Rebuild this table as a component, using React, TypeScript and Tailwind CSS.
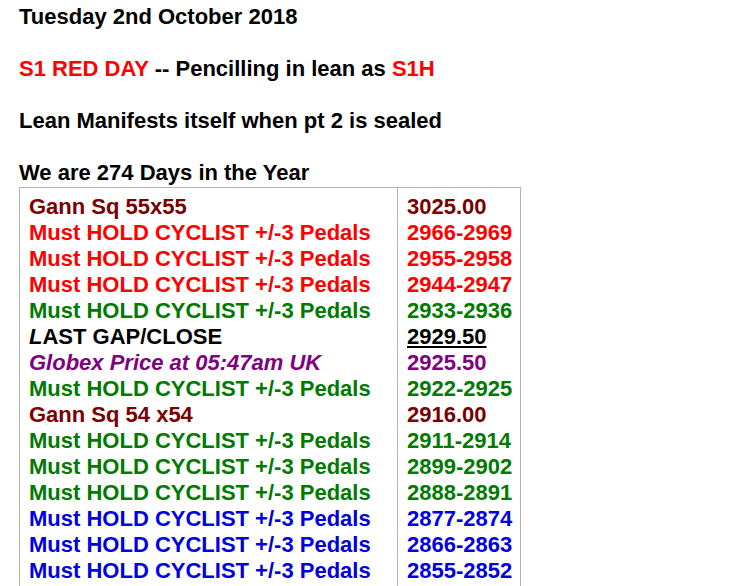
import React from "react";

const MAROON = "text-[#7a0000]";
const RED = "text-[#ff0000]";
const GREEN = "text-[#007a00]";
const BLUE = "text-[#0000e0]";
const PURPLE = "text-[#800080]";

type Row = { left: React.ReactNode; right: React.ReactNode; color: string };

const cyc = "Must HOLD CYCLIST +/-3 Pedals";

const rows: Row[] = [
  { left: "Gann Sq 55x55", right: "3025.00", color: MAROON },
  { left: cyc, right: "2966-2969", color: RED },
  { left: cyc, right: "2955-2958", color: RED },
  { left: cyc, right: "2944-2947", color: RED },
  { left: cyc, right: "2933-2936", color: GREEN },
  {
    left: (
      <>
        <span className="italic">L</span>AST GAP/CLOSE
      </>
    ),
    right: <span className="underline">2929.50</span>,
    color: "text-black",
  },
  { left: <span className="italic">Globex Price at 05:47am UK</span>, right: "2925.50", color: PURPLE },
  { left: cyc, right: "2922-2925", color: GREEN },
  { left: "Gann Sq 54 x54", right: "2916.00", color: MAROON },
  { left: cyc, right: "2911-2914", color: GREEN },
  { left: cyc, right: "2899-2902", color: GREEN },
  { left: cyc, right: "2888-2891", color: GREEN },
  { left: cyc, right: "2877-2874", color: BLUE },
  { left: cyc, right: "2866-2863", color: BLUE },
  { left: cyc, right: "2855-2852", color: BLUE },
];

export default function App() {
  return (
    <div
      className="bg-white min-h-[586px] pl-[19px] pt-[4px] text-black font-bold text-[22px] leading-[26px]"
      style={{ fontFamily: '"Liberation Sans", Arial, sans-serif' }}
    >
      <div className="mb-[26px]">Tuesday 2nd October 2018</div>
      <div className="mb-[26px]">
        <span className="text-[#ff0000]">S1 RED DAY</span> -- Pencilling in lean as{" "}
        <span className="text-[#ff0000]">S1H</span>
      </div>
      <div className="mb-[26px]">Lean Manifests itself when pt 2 is sealed</div>
      <div>We are 274 Days in the Year</div>
      <div className="flex w-[502px] border border-[#b4b4b4] mt-[1px]">
        <div className="w-[378px] border-r border-[#b4b4b4] pl-[9px] pt-[6px] pb-[6px]">
          {rows.map((r, i) => (
            <div key={i} className={`whitespace-nowrap ${r.color}`}>
              {r.left}
            </div>
          ))}
        </div>
        <div className="flex-1 pl-[9px] pt-[6px] pb-[6px]">
          {rows.map((r, i) => (
            <div key={i} className={`whitespace-nowrap ${r.color}`}>
              {r.right}
            </div>
          ))}
        </div>
      </div>
    </div>
  );
}
